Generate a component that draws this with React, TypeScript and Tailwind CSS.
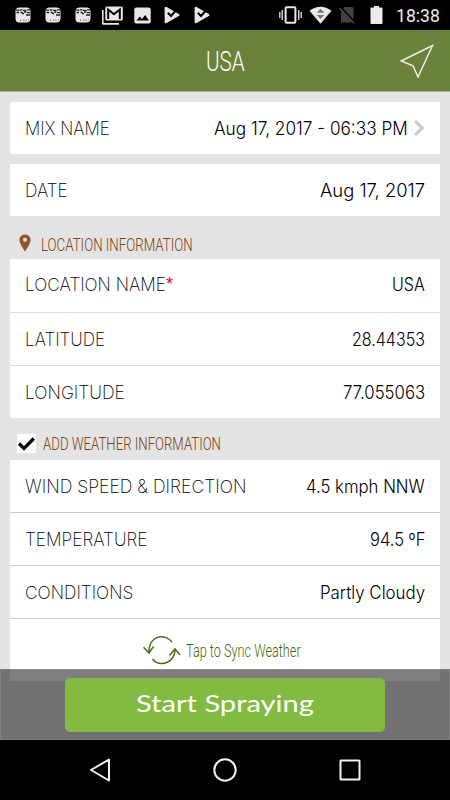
import { useLayoutEffect, useRef, useState, type ReactNode } from "react";

type FitProps = { width: number; className?: string; children: ReactNode };

/** A single line of text, condensed or expanded to a given width. */
function Fit({ width, className = "", children }: FitProps) {
  const ref = useRef<HTMLSpanElement>(null);
  const [scale, setScale] = useState(1);
  useLayoutEffect(() => {
    if (ref.current) setScale(width / ref.current.offsetWidth);
  }, [width]);
  return (
    <span className={`block shrink-0 text-left ${className}`} style={{ width }}>
      <span
        ref={ref}
        className="inline-block origin-left whitespace-nowrap"
        style={{ transform: `scaleX(${scale})` }}
      >
        {children}
      </span>
    </span>
  );
}

type RowProps = {
  label: string;
  labelWidth: number;
  value: string;
  valueWidth: number;
  required?: boolean;
  chevron?: boolean;
  className?: string;
};

function Row({ label, labelWidth, value, valueWidth, required, chevron, className = "h-[53px]" }: RowProps) {
  return (
    <div className={`flex items-center px-[15px] text-[18px] text-black ${className}`}>
      <Fit width={labelWidth} className="font-extralight">{label}</Fit>
      {required && <span className="font-['Liberation_Sans',sans-serif] font-normal text-[#e0001b]">*</span>}
      <Fit width={valueWidth} className="ml-auto font-light">{value}</Fit>
      {chevron && (
        <svg className="ml-[6px] h-[16px] w-[11px]" viewBox="0 0 11 16" fill="none" stroke="#c8c8c8" strokeWidth="3">
          <path d="M1.2 1.2 8.3 8l-7.1 6.8" />
        </svg>
      )}
    </div>
  );
}

function AppBadge() {
  return (
    <svg className="size-4" viewBox="0 0 16 16">
      <rect x=".5" y=".5" width="15" height="15" rx="4" fill="#e8e8e8" />
      <path d="M1 3.200h3.500M5 2.800h2.500M8 3.300h3.500M12 2.900h3M1.500 5.500h2.500M5.500 5.500h2M7 6.500h2M9 5h2.500M12 5.700h3M11 8h4" stroke="#222" strokeWidth="1.300" />
      <path d="M5.500 12.500v1.500M8 13h1.500M11 12.500v1.500M13 13h1" stroke="#777" strokeWidth="1" />
    </svg>
  );
}

function PlayCheck() {
  return (
    <svg className="h-[18px] w-4" viewBox="0 0 16 18">
      <path d="M.6 2.2Q.6 0 2.6 1l12.2 7q1.6 1 0 2L2.6 17Q.6 18 .6 16z" fill="#e8e8e8" />
      <path d="m3.800 6.800 3.200 3.200 6.800-7.600" fill="none" stroke="#000" strokeWidth="2.100" />
    </svg>
  );
}

function StatusBar() {
  return (
    <div className="flex h-[30px] items-center bg-black pl-[15px] pr-[10px] text-[#ececec]">
      <div className="flex items-center gap-[14px]">
        <AppBadge />
        <AppBadge />
        <AppBadge />
      </div>
      <svg className="ml-[11px] h-[19px] w-[21px]" viewBox="0 0 21 19" fill="#e8e8e8">
        <path d="M0 4h1.6v13H17v1.8H1.5Q0 18.800 0 17.300z" />
        <rect x="3.300" y=".5" width="17.500" height="14" rx="1.500" />
        <path d="M6.200 13V3.500L12 8.200l5.800-4.700V13" fill="none" stroke="#000" strokeWidth="2" />
      </svg>
      <svg className="ml-[11px] size-[17px]" viewBox="0 0 17 17">
        <rect x=".3" y=".5" width="16.400" height="16" rx="2" fill="#e8e8e8" />
        <path d="m2.500 13.500 3.200-4 2.300 2.600 3.200-4 3.800 5.400z" fill="#000" />
      </svg>
      <div className="ml-[13px] flex gap-[14px]">
        <PlayCheck />
        <PlayCheck />
      </div>
      <svg className="ml-auto h-[18px] w-[23px]" viewBox="0 0 23 18" fill="none" stroke="#e8e8e8">
        <path d="M.8 6v6M3.200 4v10M19.800 4v10M22.200 6v6" strokeWidth="1.300" />
        <rect x="6.600" y="1.200" width="9.800" height="15.600" rx="1" strokeWidth="2" />
      </svg>
      <svg className="ml-[7px] h-[18px] w-[23px]" viewBox="0 0 23 18">
        <path d="M.5 4.800Q11.500-3.500 22.500 4.800L11.500 17.800z" fill="#e8e8e8" />
        <path d="m7.700 6.800 3.800-4 3.800 4zM7.700 9h7.600l-3.800 4z" fill="#777" />
      </svg>
      <svg className="ml-[7px] h-[18px] w-[17px]" viewBox="0 0 17 18">
        <path d="M5.500 1H13q1.500 0 1.500 1.500v14H2V4.500z" fill="#424242" />
        <path d="m1.200 1.500 14.500 15.500" stroke="#000" strokeWidth="3" />
        <path d="m.5 2 14.800 15.500" stroke="#4b4b4b" strokeWidth="1.500" />
      </svg>
      <svg className="ml-[14px] h-[18px] w-[13px]" viewBox="0 0 13 18" fill="#ececec">
        <path d="M4 0h5v1.600h2.500q1 0 1 1V17q0 1-1 1h-10q-1 0-1-1V2.600q0-1 1-1H4z" />
      </svg>
      <Fit width={44} className="ml-[13px] mt-px font-['Roboto',sans-serif] text-[18px] leading-[24px]">18:38</Fit>
    </div>
  );
}

export default function App() {
  return (
    <div className="relative flex h-[800px] w-[450px] flex-col overflow-hidden bg-[#e4e4e4] font-['Inter','Liberation_Sans',sans-serif]">
      <StatusBar />

      <header className="flex h-[62px] shrink-0 items-center border-b border-[#a9b28f] bg-[#6a8239] pl-[206px] pr-[16px]">
        <Fit width={39} className="pt-[3px] font-['Roboto',sans-serif] text-[27px] font-light text-white">USA</Fit>
        <svg className="ml-auto h-[34px] w-[34px]" viewBox="0 0 34 34" fill="none" stroke="#eef1e6" strokeWidth="1.500">
          <path d="M1.200 17 32.500 1.500 18 33l-5-11.200z" strokeLinejoin="miter" />
        </svg>
      </header>

      <main className="flex flex-1 flex-col px-[10px] pt-[10px]">
        <section className="bg-white">
          <Row className="h-[52px]" label="MIX NAME" labelWidth={85} value="Aug 17, 2017 - 06:33 PM" valueWidth={194} chevron />
        </section>
        <section className="mt-[10px] bg-white">
          <Row className="h-[52px]" label="DATE" labelWidth={43} value="Aug 17, 2017" valueWidth={105} />
        </section>

        <div className="flex h-[43px] items-center pl-[9px] pt-[14px] text-[#7d4310]">
          <svg className="mb-[4px] h-[18px] w-[12px]" viewBox="0 0 12 18" fill="#8e5a2b">
            <path fillRule="evenodd" d="M6 .5C2.600.5.400 2.900.400 6 .400 9.800 6 17.500 6 17.500S11.600 9.800 11.600 6C11.600 2.900 9.400.500 6 .500zM6 3.700a2 2 0 1 1 0 4 2 2 0 0 1 0-4z" />
          </svg>
          <Fit width={152} className="ml-[9.500px] font-['Roboto',sans-serif] text-[18px] font-light">LOCATION INFORMATION</Fit>
        </div>
        <section className="divide-y divide-[#dadada] bg-white">
          <Row className="h-[54px] pb-[2px]" label="LOCATION NAME" labelWidth={141} value="USA" valueWidth={33} required />
          <Row className="h-[53px] pt-px" label="LATITUDE" labelWidth={80} value="28.44353" valueWidth={73} />
          <Row className="h-[52px] pt-px" label="LONGITUDE" labelWidth={100} value="77.055063" valueWidth={82} />
        </section>

        <div className="flex h-[42px] items-center pl-[7px] pt-[9px] text-[#7d4310]">
          <svg className="h-[19px] w-[19px] bg-white" viewBox="0 0 19 19" fill="none" stroke="#000" strokeWidth="3.300">
            <path d="m2 9.500 5 5L16.800 4.500" />
          </svg>
          <Fit width={178} className="ml-[6.500px] font-['Roboto',sans-serif] text-[18px] font-light">ADD WEATHER INFORMATION</Fit>
        </div>
        <section className="h-[221px] divide-y divide-[#cbcbcb] bg-white">
          <Row label="WIND SPEED & DIRECTION" labelWidth={221} value="4.5 kmph NNW" valueWidth={119} />
          <Row label="TEMPERATURE" labelWidth={123} value="94.5 ºF" valueWidth={55} />
          <Row label="CONDITIONS" labelWidth={108} value="Partly Cloudy" valueWidth={105} />
          <div className="flex h-[62px] items-center pl-[133px] text-[#3f6909]">
            <svg className="h-[30px] w-[38px]" viewBox="0 0 38 30" fill="none" stroke="#477113" strokeWidth="1.500">
              <path d="M6 18C5.500 8 11 1.700 18.500 1.700Q24.500 1.700 29 7M.5 12.200 6 18l4.500-6.500M9.500 24Q13 28.500 18.500 28.500C26 28.500 32 23 32 14M26.500 20.500 32 14l5 6" />
            </svg>
            <Fit width={115} className="ml-[5px] font-['Roboto',sans-serif] text-[18px] font-light">Tap to Sync Weather</Fit>
          </div>
        </section>
      </main>

      <div className="absolute inset-x-0 top-[669px] flex h-[71px] items-center justify-center border border-white/10 bg-black/50">
        <button className="flex h-[54px] w-[320px] items-center justify-center rounded-[5px] bg-[#82bb41] pb-[4px] text-white">
          <Fit width={178} className="font-['Lato',sans-serif] text-[24px]">Start Spraying</Fit>
        </button>
      </div>

      <nav className="absolute inset-x-0 bottom-0 flex h-[60px] items-center justify-between bg-black pl-[88px] pr-[88px]">
        <svg className="size-6" viewBox="0 0 24 24" fill="none" stroke="#f2f2f2" strokeWidth="2" strokeLinejoin="round">
          <path d="M21 1.500v21L3 12z" />
        </svg>
        <svg className="size-6" viewBox="0 0 24 24" fill="none" stroke="#f2f2f2" strokeWidth="2">
          <circle cx="12" cy="12" r="10.700" />
        </svg>
        <svg className="size-6" viewBox="0 0 24 24" fill="none" stroke="#f2f2f2" strokeWidth="2">
          <rect x="2.500" y="2.500" width="19" height="19" rx=".5" />
        </svg>
      </nav>
    </div>
  );
}
